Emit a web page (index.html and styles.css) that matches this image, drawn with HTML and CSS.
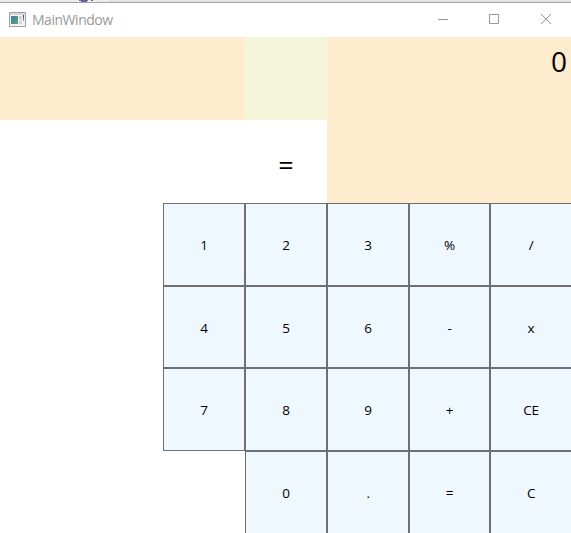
FILE: index.html
```html
<!DOCTYPE html>
<html lang="en">
<head>
<meta charset="utf-8">
<title>MainWindow</title>
<link rel="stylesheet" href="styles.css">
</head>
<body>
<div class="backdrop"><svg width="571" height="2"><path d="M109 0h462v2H109z" fill="#e2e2e2"/><path d="M79 0h9v1h-1v1h-6V1h-2zM91 0h2v1h-2z" fill="#6264a7"/></svg></div>
<header class="titlebar">
  <svg class="app-icon" width="18" height="16" viewBox="0 0 18 16">
    <defs><linearGradient id="g" x2="1" y2="1"><stop stop-color="#4879a5"/><stop offset="1" stop-color="#4fab78"/></linearGradient></defs>
    <path d="M.5.5h16v14H.5z" fill="#f4f4f4" stroke="#9da1a5"/>
    <path d="M1 1h15v2H1z" fill="#d5d8dc"/>
    <path d="M2 4h7v8H2z" fill="url(#g)"/>
    <path d="M10 4h3v4h-3zM10 9h3v3h-3z" fill="#d4d4d4"/>
    <path d="M14 3h1v3h-1z" fill="#36558c"/><path d="M14 6h1v3h-1z" fill="#64a37f"/>
  </svg>
  <span class="title">MainWindow</span>
  <div class="controls">
    <svg width="10" height="10"><path d="M0 5.5h10" stroke="#999"/></svg>
    <svg width="10" height="10"><path d="M.5.5h9v9h-9z" fill="none" stroke="#999"/></svg>
    <svg class="close" width="10" height="10"><path d="M0 0l10 10M10 0L0 10" stroke="#999"/></svg>
  </div>
</header>
<main>
  <section class="display">
    <div class="operand left"></div>
    <div class="operator"></div>
    <div class="operand result">0</div>
    <div class="equals">=</div>
  </section>
  <section class="keypad">
    <button class="key">1</button><button class="key">2</button><button class="key">3</button><button class="key">%</button><button class="key">/</button>
    <button class="key">4</button><button class="key">5</button><button class="key">6</button><button class="key">-</button><button class="key">x</button>
    <button class="key">7</button><button class="key">8</button><button class="key">9</button><button class="key">+</button><button class="key">CE</button>
    <button class="key zero">0</button><button class="key">.</button><button class="key">=</button><button class="key">C</button>
  </section>
</main>
</body>
</html>
```
FILE: styles.css
```css
* { box-sizing: border-box; }
body {
  margin: 0;
  width: 571px;
  height: 533px;
  overflow: hidden;
  background: #fff;
  color: #000;
  font-family: "Open Sans", "Noto Sans", sans-serif;
}
svg { display: block; }
.backdrop { height: 3px; background: #ececec; border-bottom: 1px solid #a5a5a5; }
.titlebar { display: flex; align-items: center; height: 34px; padding: 0 20px 0 9px; }
.app-icon { margin-top: -1px; }
.title { margin-left: 5px; font-size: 14px; letter-spacing: -0.47px; line-height: 20px; color: #999; }
.controls { display: flex; gap: 41px; margin-left: auto; margin-top: -2px; }
.close { margin-left: 1px; }
.display {
  display: grid;
  grid-template-columns: 245px 82px 245px;
  grid-template-rows: 83px 83px;
  width: 572px;
}
.operand { background: #ffebcd; }
.left { grid-area: 1 / 1; }
.operator { grid-area: 1 / 2; background: #f5f5dc; }
.result {
  grid-area: 1 / 3 / 3 / 4;
  padding: 4px 5px 0 0;
  font-size: 28px;
  line-height: 40px;
  text-align: right;
}
.equals { grid-area: 2 / 2; font-size: 27px; line-height: 90px; text-align: center; }
.keypad {
  display: grid;
  grid-template-columns: 82px 82px 82px 81px 82px;
  grid-template-rows: 83px 82px 83px 83px;
  width: 409px;
  margin-left: 163px;
}
.key {
  margin: 0;
  padding: 1px 0 0;
  border: 1px solid #707070;
  border-radius: 0;
  background: #f0f8ff;
  color: #000;
  font: 13.5px "Open Sans", "Noto Sans", sans-serif;
  letter-spacing: -0.3px;
}
.zero { grid-column: 2; }
```
